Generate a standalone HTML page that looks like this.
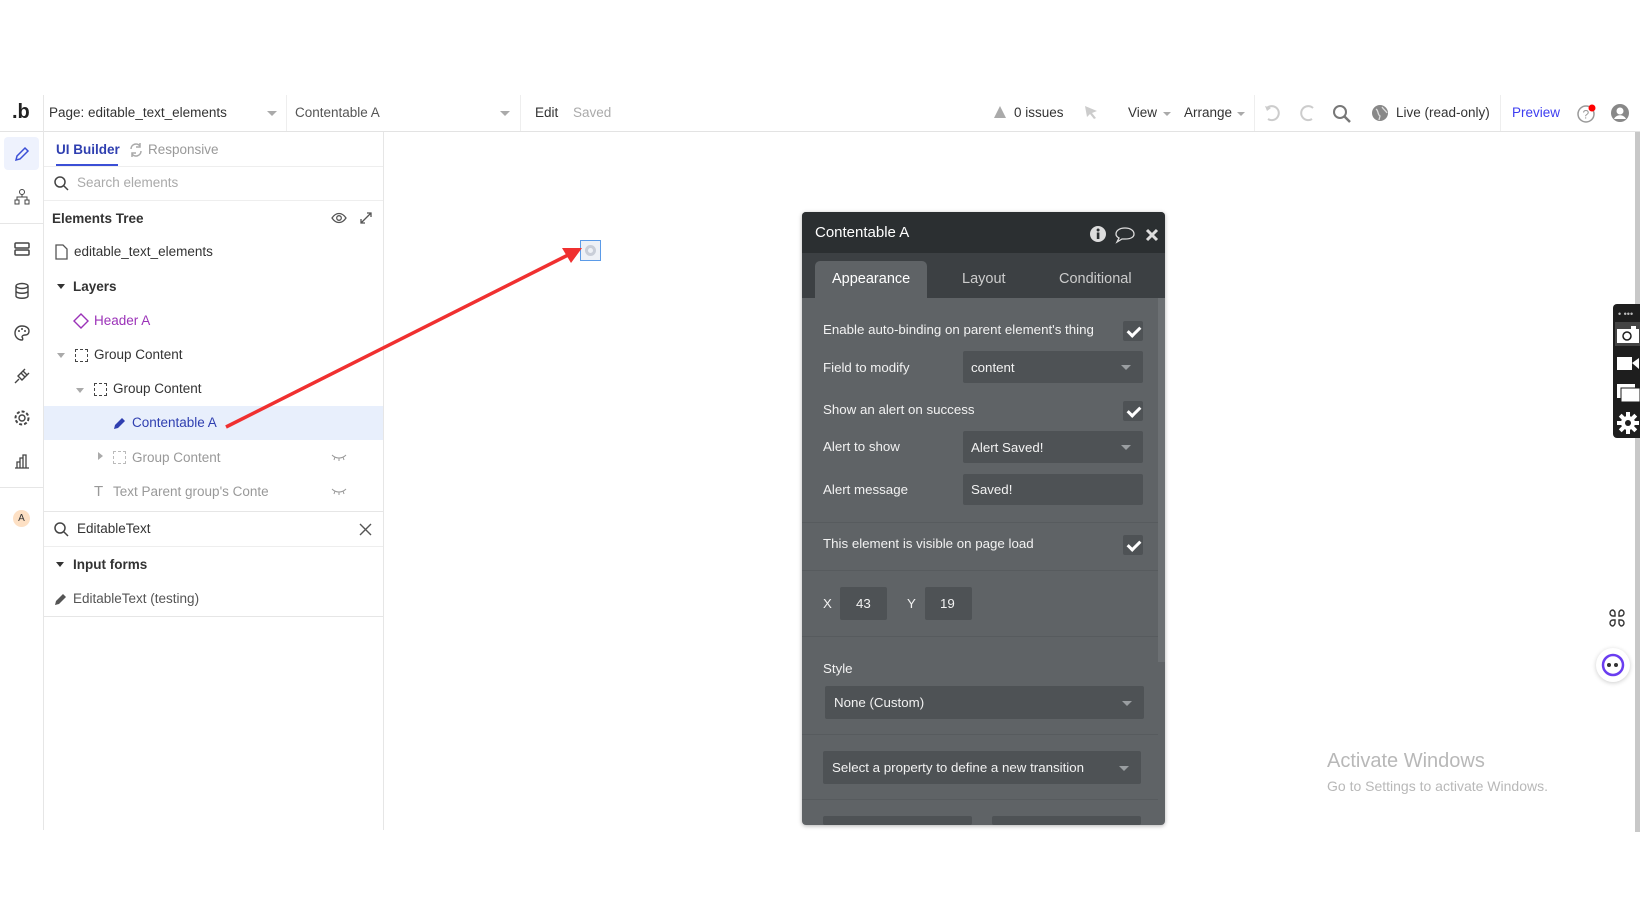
<!DOCTYPE html>
<html><head><meta charset="utf-8"><style>
*{box-sizing:border-box;margin:0;padding:0}
body{width:1640px;height:924px;background:#fff;font-family:"Liberation Sans",sans-serif;position:relative;overflow:hidden;color:#333}
.a{position:absolute}
.t{position:absolute;white-space:nowrap;font-size:13.5px;line-height:18px}
.pt{position:absolute;white-space:nowrap;font-size:13.3px;line-height:18px;color:#f2f2f2}
.cb{position:absolute;width:20px;height:20px;background:#4e5255;border-radius:2px}
.cb:after{content:"";position:absolute;left:7px;top:3px;width:5px;height:10px;border:solid #fff;border-width:0 3px 3px 0;transform:rotate(45deg)}
.dd{position:absolute;background:#4e5255;border-radius:2px}
.dd .arr{position:absolute;right:12px;top:50%;margin-top:-2px;border:5px solid transparent;border-top:5px solid #9a9ea1;border-bottom:0}
.sep{position:absolute;left:802px;width:356px;height:1px;background:#575b5e}
</style></head><body>
<!-- top bar -->
<div class="a" style="left:0;top:95px;width:1640px;height:37px;border-bottom:1px solid #e3e3e3"></div>
<div class="t" style="left:12px;top:100px;font-size:20px;line-height:24px;font-weight:bold;color:#222">.b</div>
<div class="a" style="left:43px;top:95px;width:1px;height:735px;background:#e6e6e6"></div>
<div class="t" style="left:49px;top:104px;color:#333">Page: editable_text_elements</div>
<div class="a" style="left:267px;top:111px;border:5px solid transparent;border-top:5px solid #aaa"></div>
<div class="a" style="left:286px;top:95px;width:1px;height:36px;background:#eee"></div>
<div class="t" style="left:295px;top:104px;color:#555">Contentable A</div>
<div class="a" style="left:500px;top:111px;border:5px solid transparent;border-top:5px solid #aaa"></div>
<div class="a" style="left:520px;top:95px;width:1px;height:36px;background:#eee"></div>
<div class="t" style="left:535px;top:104px;color:#333">Edit</div>
<div class="t" style="left:573px;top:104px;color:#aaa">Saved</div>
<svg class="a" style="left:993px;top:105px" width="14" height="14"><path d="M7 1L13 13H1Z" fill="#aaa"/></svg>
<div class="t" style="left:1014px;top:104px">0 issues</div>
<svg class="a" style="left:1083px;top:104px" width="16" height="16"><path d="M2 2L14 7L9 9L13 14L11 15L7 10L4 13Z" fill="#ccc"/></svg>
<div class="t" style="left:1128px;top:104px">View</div>
<div class="a" style="left:1163px;top:112px;border:4px solid transparent;border-top:4px solid #aaa"></div>
<div class="t" style="left:1184px;top:104px">Arrange</div>
<div class="a" style="left:1237px;top:112px;border:4px solid transparent;border-top:4px solid #aaa"></div>
<div class="a" style="left:1254px;top:95px;width:1px;height:36px;background:#eee"></div>
<svg class="a" style="left:1263px;top:103px" width="20" height="20"><path d="M4 5A7 7 0 1 1 5 16" stroke="#ccc" stroke-width="2" fill="none"/><path d="M2 3L4 8L8 5Z" fill="#ccc"/></svg>
<svg class="a" style="left:1297px;top:103px" width="20" height="20"><path d="M16 5A7 7 0 1 0 15 16" stroke="#ccc" stroke-width="2" fill="none"/></svg>
<svg class="a" style="left:1332px;top:104px" width="20" height="20"><circle cx="8" cy="8" r="6" stroke="#777" stroke-width="2" fill="none"/><path d="M12 12L18 18" stroke="#777" stroke-width="2.5"/></svg>
<svg class="a" style="left:1372px;top:105px" width="16" height="16"><circle cx="8" cy="8" r="8" fill="#888"/><path d="M4 4C7 6 5 9 8 11L7 15M10 2C12 5 14 6 15 8" stroke="#ddd" stroke-width="1.3" fill="none"/></svg>
<div class="t" style="left:1396px;top:104px;color:#333">Live (read-only)</div>
<div class="a" style="left:1500px;top:95px;width:1px;height:36px;background:#eee"></div>
<div class="t" style="left:1512px;top:104px;color:#3d3df0">Preview</div>
<svg class="a" style="left:1576px;top:103px" width="22" height="22"><circle cx="10" cy="11" r="8" stroke="#999" stroke-width="1.5" fill="none"/><text x="6.5" y="15.5" font-size="12" fill="#999" font-family="Liberation Sans">?</text><circle cx="16" cy="5" r="3.5" fill="#f00"/></svg>
<svg class="a" style="left:1610px;top:103px" width="20" height="20"><circle cx="10" cy="10" r="9" fill="#888"/><circle cx="10" cy="8" r="3.5" fill="#fff"/><path d="M4 16C6 11 14 11 16 16" fill="#fff"/></svg>
<!-- sidebar -->
<div class="a" style="left:4px;top:137px;width:35px;height:33px;background:#eef2fd;border-radius:4px"></div>
<svg class="a" style="left:13px;top:145px" width="18" height="18"><path d="M3 15L4 11L12 3L15 6L7 14Z" stroke="#3b4fd6" stroke-width="1.5" fill="none"/></svg>
<svg class="a" style="left:13px;top:188px" width="18" height="18"><circle cx="9" cy="4" r="2.5" stroke="#444" fill="none"/><rect x="2" y="12" width="4" height="4" stroke="#444" fill="none"/><rect x="12" y="12" width="4" height="4" stroke="#444" fill="none"/><path d="M9 6V9M4 12V9H14V12" stroke="#444" fill="none"/></svg>
<div class="a" style="left:0;top:223px;width:43px;height:1px;background:#e6e6e6"></div>
<svg class="a" style="left:13px;top:240px" width="18" height="18"><rect x="2" y="3" width="14" height="5" rx="1" stroke="#444" fill="none" stroke-width="1.5"/><rect x="2" y="10" width="14" height="5" rx="1" stroke="#444" fill="none" stroke-width="1.5"/></svg>
<svg class="a" style="left:13px;top:282px" width="18" height="18"><ellipse cx="9" cy="4" rx="6" ry="2.5" stroke="#444" fill="none" stroke-width="1.4"/><path d="M3 4V14C3 17 15 17 15 14V4M3 9C3 12 15 12 15 9" stroke="#444" fill="none" stroke-width="1.4"/></svg>
<svg class="a" style="left:13px;top:324px" width="18" height="18"><path d="M9 2C4 2 2 6 2 9C2 13 5 16 9 16C10 16 10 14 9 13C9 12 10 11 12 11C15 11 16 9 16 7C16 4 13 2 9 2Z" stroke="#444" fill="none" stroke-width="1.4"/><circle cx="6" cy="7" r="1" fill="#444"/><circle cx="9" cy="5" r="1" fill="#444"/><circle cx="12" cy="7" r="1" fill="#444"/></svg>
<svg class="a" style="left:13px;top:367px" width="18" height="18"><path d="M2 16L6 12M8 6L12 10M10 4L14 8L9 13L5 9Z M12 2L10 4M16 6L14 8" stroke="#444" fill="none" stroke-width="1.4"/></svg>
<svg class="a" style="left:13px;top:409px" width="18" height="18"><circle cx="9" cy="9" r="3" stroke="#444" fill="none" stroke-width="1.4"/><circle cx="9" cy="9" r="6.5" stroke="#444" fill="none" stroke-width="2" stroke-dasharray="3 2"/></svg>
<svg class="a" style="left:13px;top:452px" width="18" height="18"><path d="M2 16H16M4 16V10H7V16M7 16V6H10V16M10 16V3H13V16" stroke="#444" fill="none" stroke-width="1.3"/></svg>
<div class="a" style="left:0;top:487px;width:43px;height:1px;background:#e6e6e6"></div>
<div class="a" style="left:13px;top:510px;width:17px;height:17px;border-radius:50%;background:#fde0c4;font-size:10px;text-align:center;line-height:17px;color:#333">A</div>
<!-- left panel -->
<div class="a" style="left:383px;top:132px;width:1px;height:698px;background:#e6e6e6"></div>
<div class="t" style="left:56px;top:141px;color:#2f3fb0;font-weight:bold">UI Builder</div>
<div class="a" style="left:56px;top:164px;width:62px;height:2px;background:#3b4fd6"></div>
<svg class="a" style="left:128px;top:142px" width="16" height="16"><path d="M3 7A5 5 0 0 1 12 4M13 9A5 5 0 0 1 4 12" stroke="#aaa" stroke-width="1.5" fill="none"/><path d="M12 1V5H8M4 15V11H8" stroke="#aaa" stroke-width="1.5" fill="none"/></svg>
<div class="t" style="left:148px;top:141px;color:#999">Responsive</div>
<div class="a" style="left:44px;top:166px;width:339px;height:1px;background:#eee"></div>
<svg class="a" style="left:53px;top:175px" width="16" height="16"><circle cx="7" cy="7" r="5" stroke="#444" stroke-width="1.5" fill="none"/><path d="M11 11L15 15" stroke="#444" stroke-width="1.5"/></svg>
<div class="t" style="left:77px;top:174px;color:#aaa">Search elements</div>
<div class="a" style="left:44px;top:200px;width:339px;height:1px;background:#eee"></div>
<div class="t" style="left:52px;top:210px;font-weight:bold;color:#333">Elements Tree</div>
<svg class="a" style="left:331px;top:211px" width="16" height="14"><path d="M1 7C5 1 11 1 15 7C11 13 5 13 1 7Z" stroke="#555" fill="none" stroke-width="1.3"/><circle cx="8" cy="7" r="2.3" stroke="#555" fill="none" stroke-width="1.3"/></svg>
<svg class="a" style="left:358px;top:210px" width="16" height="16"><path d="M3 13L13 3M9 3H13V7M3 9V13H7" stroke="#555" fill="none" stroke-width="1.3"/></svg>
<svg class="a" style="left:55px;top:244px" width="13" height="16"><path d="M1 1H8L12 5V15H1Z" stroke="#555" fill="none" stroke-width="1.3"/></svg>
<div class="t" style="left:74px;top:243px">editable_text_elements</div>
<div class="a" style="left:57px;top:284px;border:4.5px solid transparent;border-top:5px solid #333"></div>
<div class="t" style="left:73px;top:278px;font-weight:bold">Layers</div>
<svg class="a" style="left:73px;top:313px" width="16" height="16"><path d="M8 1L15 8L8 15L1 8Z" stroke="#9b32b8" stroke-width="1.4" fill="none"/></svg>
<div class="t" style="left:94px;top:312px;color:#9b32b8">Header A</div>
<div class="a" style="left:57px;top:353px;border:4px solid transparent;border-top:5px solid #aaa"></div>
<div class="a" style="left:75px;top:349px;width:13px;height:13px;border:1.5px dashed #444"></div>
<div class="t" style="left:94px;top:346px">Group Content</div>
<div class="a" style="left:76px;top:388px;border:4px solid transparent;border-top:5px solid #aaa"></div>
<div class="a" style="left:94px;top:383px;width:13px;height:13px;border:1.5px dashed #444"></div>
<div class="t" style="left:113px;top:380px">Group Content</div>
<div class="a" style="left:44px;top:406px;width:339px;height:34px;background:#e8effc"></div>
<svg class="a" style="left:113px;top:416px" width="14" height="14"><path d="M1 13L2 9L9 2L12 5L5 12Z" fill="#2f3fb0"/></svg>
<div class="t" style="left:132px;top:414px;color:#2f3fb0">Contentable A</div>
<div class="a" style="left:98px;top:452px;border:4px solid transparent;border-left:5px solid #aaa"></div>
<div class="a" style="left:113px;top:451px;width:13px;height:13px;border:1.5px dashed #bbb"></div>
<div class="t" style="left:132px;top:449px;color:#999">Group Content</div>
<svg class="a" style="left:331px;top:453px" width="16" height="8"><path d="M1 2C5 6 11 6 15 2M4 4L3 7M8 5V8M12 4L13 7" stroke="#999" stroke-width="1" fill="none"/></svg>
<div class="t" style="left:94px;top:483px;color:#999;font-size:15px">T</div>
<div class="t" style="left:113px;top:483px;color:#999">Text Parent group's Conte</div>
<svg class="a" style="left:331px;top:487px" width="16" height="8"><path d="M1 2C5 6 11 6 15 2M4 4L3 7M8 5V8M12 4L13 7" stroke="#999" stroke-width="1" fill="none"/></svg>
<div class="a" style="left:44px;top:511px;width:339px;height:1px;background:#e6e6e6"></div>
<svg class="a" style="left:53px;top:521px" width="16" height="16"><circle cx="7" cy="7" r="5" stroke="#444" stroke-width="1.5" fill="none"/><path d="M11 11L15 15" stroke="#444" stroke-width="1.5"/></svg>
<div class="t" style="left:77px;top:520px">EditableText</div>
<svg class="a" style="left:359px;top:523px" width="13" height="13"><path d="M1 1L12 12M12 1L1 12" stroke="#555" stroke-width="1.4"/></svg>
<div class="a" style="left:44px;top:546px;width:339px;height:1px;background:#eee"></div>
<div class="a" style="left:56px;top:562px;border:4.5px solid transparent;border-top:5px solid #333"></div>
<div class="t" style="left:73px;top:556px;font-weight:bold">Input forms</div>
<svg class="a" style="left:54px;top:592px" width="14" height="14"><path d="M1 13L2 9L9 2L12 5L5 12Z" fill="#555"/></svg>
<div class="t" style="left:73px;top:590px;color:#555">EditableText (testing)</div>
<div class="a" style="left:44px;top:616px;width:339px;height:1px;background:#e6e6e6"></div>
<!-- canvas element + arrow -->
<div class="a" style="left:580px;top:240px;width:21px;height:21px;border:1px solid #5b9be8;background:#eef1f6"></div>
<div class="a" style="left:585px;top:245px;width:11px;height:11px;border:3px solid #c9ced8;border-radius:50%"></div>
<svg class="a" style="left:0;top:0" width="1640" height="924"><path d="M226 427L570 254" stroke="#f03030" stroke-width="3.5"/><path d="M582 248L562 248L571 263Z" fill="#f03030"/></svg>
<div class="a" style="left:1635px;top:132px;width:5px;height:700px;background:#c8c8c8"></div>
<!-- popup -->
<div class="a" style="left:802px;top:212px;width:363px;height:613px;background:#5f6366;border-radius:4px;box-shadow:0 1px 4px rgba(0,0,0,.3);overflow:hidden">
 <div class="a" style="left:0;top:0;width:363px;height:41px;background:#2b2f31"></div>
 <div class="a" style="left:0;top:41px;width:363px;height:45px;background:#3c4043"></div>
 <div class="a" style="left:13px;top:49px;width:112px;height:38px;background:#5f6366;border-radius:5px 5px 0 0"></div>
 <div class="a" style="left:356px;top:86px;width:7px;height:364px;background:#6c7073"></div>
</div>
<div class="pt" style="left:815px;top:224px;font-size:15px;color:#fff">Contentable A</div>
<svg class="a" style="left:1089px;top:225px" width="18" height="18"><circle cx="9" cy="9" r="8" fill="#ddd"/><rect x="7.8" y="7.5" width="2.6" height="6.5" fill="#2b2f31"/><circle cx="9.1" cy="5" r="1.5" fill="#2b2f31"/></svg>
<svg class="a" style="left:1114px;top:226px" width="22" height="18"><path d="M11 2C5 2 2 5 2 8C2 10 3 11 5 12L3 16L8 13C9 13 10 13 11 13C17 13 20 11 20 8C20 5 17 2 11 2Z" stroke="#ddd" stroke-width="1.3" fill="none"/></svg>
<svg class="a" style="left:1145px;top:228px" width="14" height="14"><path d="M2 2L12 12M12 2L2 12" stroke="#ddd" stroke-width="3"/></svg>
<div class="pt" style="left:832px;top:270px;font-size:14.5px;color:#fff">Appearance</div>
<div class="pt" style="left:962px;top:270px;font-size:14.5px;color:#ccc">Layout</div>
<div class="pt" style="left:1059px;top:270px;font-size:14.5px;color:#ccc">Conditional</div>
<div class="pt" style="left:823px;top:321px">Enable auto-binding on parent element's thing</div>
<div class="cb" style="left:1123px;top:321px"></div>
<div class="pt" style="left:823px;top:359px">Field to modify</div>
<div class="dd" style="left:963px;top:351px;width:180px;height:32px"><div class="pt" style="left:8px;top:8px">content</div><div class="arr"></div></div>
<div class="pt" style="left:823px;top:401px">Show an alert on success</div>
<div class="cb" style="left:1123px;top:401px"></div>
<div class="pt" style="left:823px;top:438px">Alert to show</div>
<div class="dd" style="left:963px;top:431px;width:180px;height:32px"><div class="pt" style="left:8px;top:8px">Alert Saved!</div><div class="arr"></div></div>
<div class="pt" style="left:823px;top:481px">Alert message</div>
<div class="dd" style="left:963px;top:474px;width:180px;height:31px"><div class="pt" style="left:8px;top:7px">Saved!</div></div>
<div class="sep" style="top:522px"></div>
<div class="pt" style="left:823px;top:535px">This element is visible on page load</div>
<div class="cb" style="left:1123px;top:535px"></div>
<div class="sep" style="top:570px"></div>
<div class="pt" style="left:823px;top:595px">X</div>
<div class="dd" style="left:840px;top:587px;width:47px;height:33px"><div class="pt" style="left:16px;top:8px">43</div></div>
<div class="pt" style="left:907px;top:595px">Y</div>
<div class="dd" style="left:925px;top:587px;width:47px;height:33px"><div class="pt" style="left:15px;top:8px">19</div></div>
<div class="sep" style="top:636px"></div>
<div class="pt" style="left:823px;top:660px">Style</div>
<div class="dd" style="left:825px;top:686px;width:319px;height:33px"><div class="pt" style="left:9px;top:8px">None (Custom)</div><div class="arr"></div></div>
<div class="sep" style="top:734px"></div>
<div class="dd" style="left:823px;top:751px;width:318px;height:33px"><div class="pt" style="left:9px;top:8px">Select a property to define a new transition</div><div class="arr"></div></div>
<div class="sep" style="top:799px"></div>
<div class="dd" style="left:823px;top:816px;width:149px;height:9px"></div>
<div class="dd" style="left:992px;top:816px;width:149px;height:9px"></div>
<!-- right floating toolbar -->
<div class="a" style="left:1613px;top:304px;width:30px;height:134px;background:#1e1e1e;border-radius:4px 0 0 4px"></div>
<div class="a" style="left:1615px;top:322px;width:25px;height:24px;background:#444"></div>
<div class="t" style="left:1618px;top:305px;color:#bbb;font-size:9px">• •••</div>
<svg class="a" style="left:1616px;top:322px" width="24" height="115"><rect x="1" y="7" width="22" height="14" fill="#fff"/><rect x="15" y="4" width="5" height="3" fill="#fff"/><circle cx="11" cy="14" r="4" stroke="#1e1e1e" stroke-width="1.5" fill="none"/><rect x="1" y="35" width="15" height="13" fill="#fff"/><path d="M16 41L23 36V47Z" fill="#fff"/><rect x="1" y="62" width="18" height="14" fill="#fff"/><rect x="5" y="66" width="19" height="14" fill="#fff" stroke="#1e1e1e"/><g transform="translate(12 101)"><circle r="7" fill="#fff"/><path d="M-2 -11H2V11H-2ZM-11 -2H11V2H-11Z" fill="#fff"/><path d="M-2 -11H2V11H-2ZM-11 -2H11V2H-11Z" fill="#fff" transform="rotate(45)"/><circle r="3" fill="#1e1e1e"/></g></svg>
<svg class="a" style="left:1607px;top:608px" width="20" height="20"><path d="M6 2A3 3 0 1 0 6 8H8V6A4 4 0 0 0 6 2ZM14 2A3 3 0 1 1 14 8H12V6A4 4 0 0 1 14 2ZM6 18A3 3 0 1 1 6 12H8V14A4 4 0 0 1 6 18ZM14 18A3 3 0 1 0 14 12H12V14A4 4 0 0 0 14 18Z" stroke="#333" stroke-width="1.4" fill="none"/></svg>
<div class="a" style="left:1596px;top:648px;width:34px;height:34px;border-radius:50%;background:#fff;box-shadow:0 1px 5px rgba(0,0,0,.2)"></div>
<svg class="a" style="left:1600px;top:652px" width="26" height="26"><circle cx="13" cy="13" r="10" stroke="#6a3df0" stroke-width="2.5" fill="none"/><circle cx="9" cy="13" r="2" fill="#333"/><circle cx="16" cy="13" r="2" fill="#333"/></svg>
<!-- watermark -->
<div class="t" style="left:1327px;top:749px;font-size:20px;line-height:24px;color:#b8b8b8">Activate Windows</div>
<div class="t" style="left:1327px;top:777px;font-size:14px;color:#b8b8b8">Go to Settings to activate Windows.</div>
</body></html>
